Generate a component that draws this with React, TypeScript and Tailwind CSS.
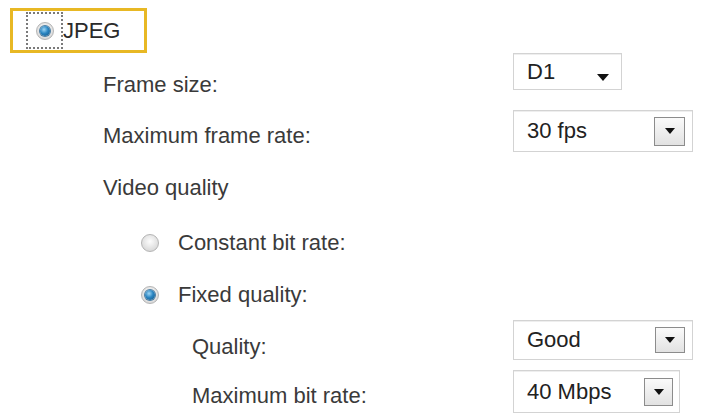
import React from "react";

type RadioProps = { checked?: boolean };

function Radio({ checked = false }: RadioProps) {
  return (
    <span className="flex h-[18px] w-[18px] shrink-0 items-center justify-center rounded-full border border-[#b4b4b4] bg-[radial-gradient(circle_at_50%_40%,#fdfdfd,#dcdcdc_70%,#c9c9c9)]">
      {checked && (
        <span className="h-[10px] w-[10px] rounded-full bg-[radial-gradient(circle_at_40%_35%,#9fd6f5,#2b86c2_45%,#0e4f80)] shadow-[0_0_0_1px_#4c7ea3]" />
      )}
    </span>
  );
}

function Arrow() {
  return (
    <svg width="12" height="7" viewBox="0 0 12 7" aria-hidden>
      <path d="M0 0h12L6 7z" fill="#111" />
    </svg>
  );
}

type SelectProps = {
  value: string;
  className: string;
  button?: string;
  plain?: boolean;
};

function Select({ value, className, button, plain }: SelectProps) {
  return (
    <div
      className={`flex shrink-0 items-center justify-between border border-[#d3d3d3] bg-white pl-[13px] text-[#222] shadow-[inset_0_1px_0_#eee] ${className}`}
    >
      <span>{value}</span>
      {plain ? (
        <span className="mr-[12px] mt-[12px] flex">
          <Arrow />
        </span>
      ) : (
        <span
          className={`flex items-center justify-center border border-[#8c8c8c] bg-[linear-gradient(#fafafa,#e2e2e2)] ${button}`}
        >
          <svg width="10" height="6" viewBox="0 0 10 6" aria-hidden>
            <path d="M0 0h10L5 6z" fill="#111" />
          </svg>
        </span>
      )}
    </div>
  );
}

export default function App() {
  return (
    <div className="h-[418px] w-[701px] overflow-hidden bg-white font-['Liberation_Sans',Arial,sans-serif] text-[22px] leading-none text-[#3a3a3a]">
      <div className="pl-[10px] pt-[8px]">
        <div className="flex h-[45px] w-[137px] items-center border-[3px] border-[#e8b824]">
          <div className="ml-[13px] flex h-[37px] w-[37px] items-center justify-center border-2 border-dotted border-[#7a7a7a]">
            <Radio checked />
          </div>
          <span className="text-[#2a2a2a]">JPEG</span>
        </div>
      </div>

      <div className="mt-[4px] flex flex-col">
        <div className="flex h-[52px] items-center">
          <span className="w-[513px] shrink-0 pl-[103px] pt-[4px]">Frame size:</span>
          <Select value="D1" plain className="mb-[23px] h-[37px] w-[109px]" />
        </div>

        <div className="flex h-[52px] items-center">
          <span className="w-[513px] shrink-0 pl-[103px] pt-[2px]">Maximum frame rate:</span>
          <Select
            value="30 fps"
            className="mb-[8px] h-[42px] w-[180px] pr-[7px]"
            button="h-[29px] w-[31px]"
          />
        </div>

        <div className="flex h-[52px] items-center">
          <span className="pl-[103px] pt-[2px]">Video quality</span>
        </div>

        <div className="flex h-[56px] items-center pl-[141px] pt-[4px]">
          <Radio />
          <span className="ml-[19px]">Constant bit rate:</span>
        </div>

        <div className="flex h-[50px] items-center pl-[141px] pt-[2px]">
          <Radio checked />
          <span className="ml-[19px]">Fixed quality:</span>
        </div>

        <div className="flex h-[51px] items-center">
          <span className="w-[513px] shrink-0 pl-[192px] pt-[4px]">Quality:</span>
          <Select
            value="Good"
            className="mb-[9px] h-[40px] w-[180px] pr-[7px]"
            button="h-[26px] w-[30px]"
          />
        </div>

        <div className="flex h-[48px] items-center">
          <span className="w-[513px] shrink-0 pl-[192px] pt-[4px]">Maximum bit rate:</span>
          <Select
            value="40 Mbps"
            className="mb-[5px] h-[43px] w-[167px] pr-[6px]"
            button="h-[28px] w-[29px]"
          />
        </div>
      </div>
    </div>
  );
}
